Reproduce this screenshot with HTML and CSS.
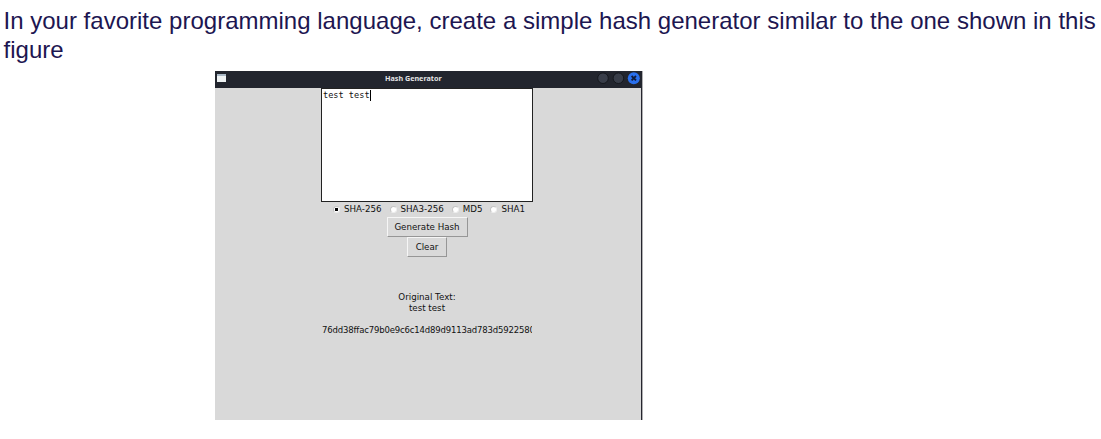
FILE: index.html
```html
<!DOCTYPE html>
<html lang="en">
<head>
<meta charset="utf-8">
<title>Hash Generator</title>
<link rel="stylesheet" href="styles.css">
</head>
<body>
<p class="prompt"><span class="prompt-line">In your favorite programming language, create a simple hash generator similar to the one shown in this</span> <span class="prompt-end">figure</span></p>
<main class="window">
  <header class="titlebar">
    <span class="app-icon"></span>
    <h1 class="title">Hash Generator</h1>
    <div class="controls">
      <svg width="45" height="16" viewBox="0 0 45 16">
        <circle cx="8" cy="7.2" r="5.3" fill="#383d49" stroke="#14171d"/>
        <circle cx="23.4" cy="7.2" r="5.3" fill="#383d49" stroke="#14171d"/>
        <circle cx="38.8" cy="7.2" r="6" fill="#2a70ee"/>
        <path d="M36.6 5 41 9.4M41 5 36.6 9.4" stroke="#101c3c" stroke-width="1.8"/>
      </svg>
    </div>
  </header>
  <section class="content">
    <div class="editor"><span class="typed">test test</span></div>
    <div class="options">
      <label class="option"><i class="radio checked"></i><span>SHA-256</span></label>
      <label class="option"><i class="radio"></i><span>SHA3-256</span></label>
      <label class="option"><i class="radio"></i><span>MD5</span></label>
      <label class="option"><i class="radio"></i><span>SHA1</span></label>
    </div>
    <button class="button generate">Generate Hash</button>
    <button class="button clear">Clear</button>
    <div class="result">
      <div>Original Text:</div>
      <div class="original">test test</div>
      <div class="hash">76dd38ffac79b0e9c6c14d89d9113ad783d5922580</div>
    </div>
  </section>
</main>
</body>
</html>
```
FILE: styles.css
```css
* { box-sizing: border-box; }
body { margin: 0; background: #fff; overflow: hidden; }
.prompt {
  margin: 0;
  padding: 6px 0 0 3.5px;
  height: 71px;
  font: 24px/29px "Liberation Sans", Arial, sans-serif;
  letter-spacing: 0.01px;
  color: #1d1651;
  white-space: nowrap;
}
.prompt-line { display: block; }
.window {
  width: 428px;
  height: 349px;
  margin-left: 215px;
  background: #d9d9d9;
  border-right: 1px solid #b0b0b2;
  font: 8.7px/11px "DejaVu Sans", sans-serif;
  color: #111;
}
.titlebar {
  display: grid;
  grid-template-columns: 170px 1fr 45px;
  height: 17px;
  background: #22252e;
  padding-right: 2px;
}
.app-icon {
  width: 9px;
  height: 8px;
  margin: 3px 0 0 2px;
  background: #eef2f3;
  border-top: 2px solid #a9b8c6;
}
.title { margin: 0; font: bold 7.2px/14px "Noto Sans", sans-serif; color: #e4e4e6; }
.controls { height: 16px; }
.content {
  display: flex;
  flex-direction: column;
  align-items: center;
  height: 332px;
  border-right: 1px solid #25262e;
  padding-right: 2px;
}
.editor {
  width: 212px;
  height: 114px;
  padding: 1px;
  background: #fff;
  border: 1px solid #222;
  font: 8.6px/11px "DejaVu Sans Mono", monospace;
}
.typed { display: inline-block; height: 11px; border-right: 1px solid #000; }
.options { display: flex; width: 194px; height: 14px; align-items: center; justify-content: space-between; padding-left: 2px; margin-left: 2px; }
.option { display: flex; align-items: center; gap: 4px; white-space: nowrap; }
.radio { width: 7px; height: 7px; border-radius: 50%; background: #fff; border: 1px solid; border-color: #c4c4c4 #eee #eee #c4c4c4; }
.checked { background: radial-gradient(circle, #000 0 1.4px, #fff 2px); }
.button {
  display: block;
  height: 20px;
  padding: 0;
  background: #d9d9d9;
  border: 1px solid;
  border-color: #f6f6f6 #969696 #969696 #f6f6f6;
  font: inherit;
  color: inherit;
  text-align: center;
  white-space: nowrap;
}
.generate { width: 81px; margin-top: 1px; }
.clear { width: 40px; }
.result { width: 210px; margin-top: 35px; overflow: hidden; text-align: center; white-space: nowrap; }
.hash { margin-top: 11px; text-align: left; font-size: 8.5px; letter-spacing: -0.16px; }
```
